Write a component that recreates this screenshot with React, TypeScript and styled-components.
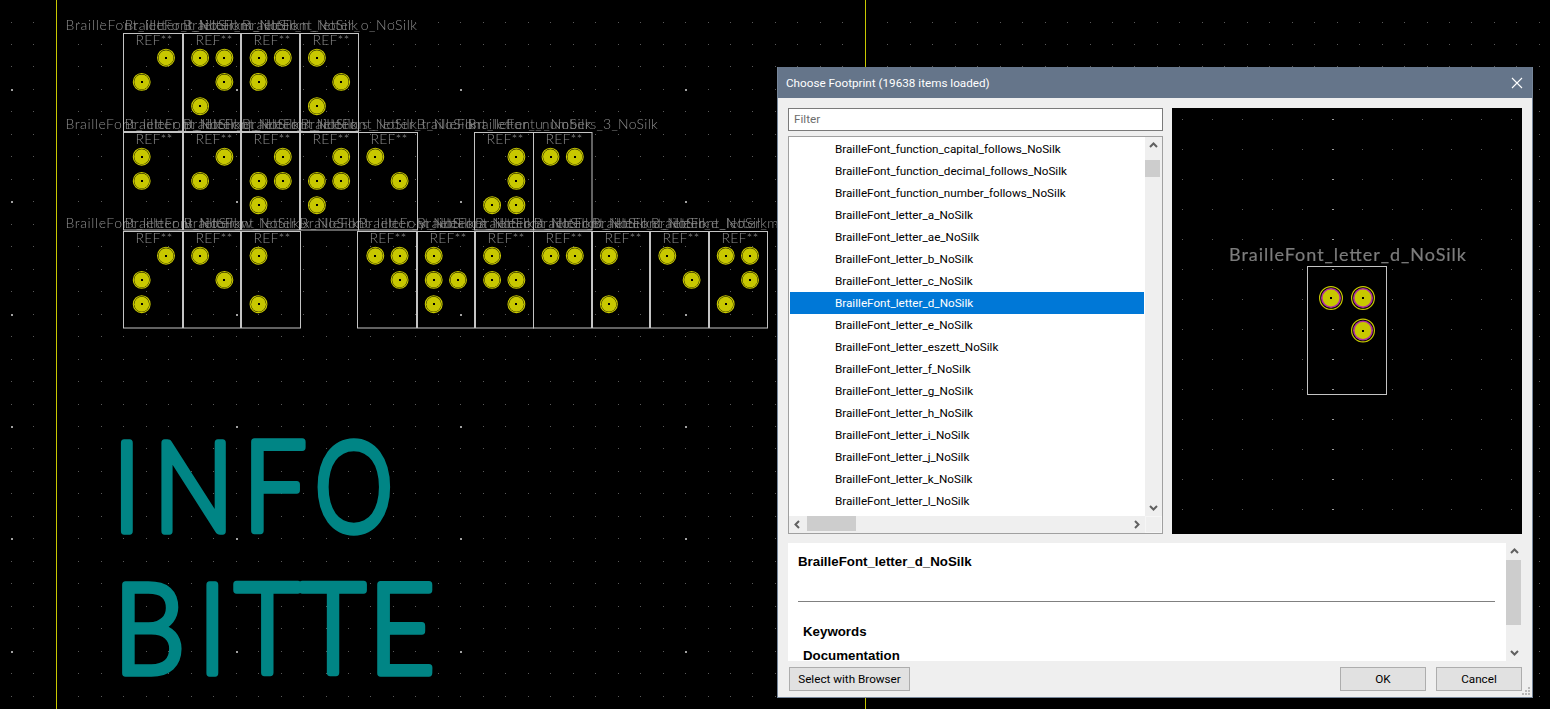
import React from 'react';
import styled, { createGlobalStyle } from 'styled-components';

const Global = createGlobalStyle`
  html, body { margin: 0; padding: 0; background: #000; overflow: hidden; }
  #root { width: 1550px; height: 709px; }
`;

const Desktop = styled.div`
  position: relative;
  width: 1550px;
  height: 709px;
  background: #000;
  overflow: hidden;
`;

const CanvasSvg = styled.svg`
  position: absolute;
  inset: 0;
  display: block;
  will-change: transform;
`;

const SmallLabel = styled.text`
  font-family: 'Lato', 'DejaVu Sans', sans-serif;
  font-weight: 300;
  font-size: 14px;
  fill: #8e8e8e;
`;

const RefText = styled.text`
  font-family: 'Lato', 'DejaVu Sans', sans-serif;
  font-weight: 300;
  font-size: 14px;
  fill: #8e8e8e;
`;

const BigLetter = styled.text`
  font-family: 'Lato', 'Noto Sans', sans-serif;
  font-weight: 300;
  font-size: 125px;
  fill: #008585;
  stroke: #008585;
  stroke-width: 7.5px;
  stroke-linejoin: round;
`;

const PreviewLabel = styled.text`
  font-family: 'Lato', 'DejaVu Sans', sans-serif;
  font-weight: 400;
  font-size: 18px;
  fill: #7c7c7c;
  stroke: #7c7c7c;
  stroke-width: 0.2px;
`;

const Dialog = styled.div`
  position: absolute;
  left: 777px;
  top: 67px;
  width: 756px;
  height: 631px;
  box-sizing: border-box;
  background: #efefef;
  border: 1px solid #76869a;
  border-top: 0;
  display: flex;
  flex-direction: column;
  font-family: 'Roboto', 'Open Sans', sans-serif;
  font-size: 11.7px;
  color: #000;
`;

const TitleBar = styled.div`
  height: 31px;
  flex: none;
  background: #65758a;
  color: #fff;
  display: flex;
  align-items: center;
  justify-content: space-between;
  padding: 0 9px 0 8px;
  font-size: 11.7px;
`;

const CloseBtn = styled.span`
  display: flex;
  width: 12px;
  height: 12px;
`;

const Body = styled.div`
  display: flex;
  flex-direction: column;
  flex: 1;
  padding: 10px 10px 6px 10px;
  min-height: 0;
`;

const TopRow = styled.div`
  display: flex;
  gap: 9px;
  height: 426px;
  flex: none;
`;

const LeftCol = styled.div`
  width: 375px;
  display: flex;
  flex-direction: column;
  gap: 5px;
`;

const FilterBox = styled.div`
  height: 23px;
  box-sizing: border-box;
  flex: none;
  background: #fff;
  border: 1px solid #7a7a7a;
  color: #6d6d6d;
  display: flex;
  align-items: center;
  padding: 0 0 1px 5px;
`;

const ListFrame = styled.div`
  flex: 1;
  min-height: 0;
  box-sizing: border-box;
  border: 1px solid #a0a0a0;
  background: #fff;
  display: grid;
  grid-template-columns: 1fr 17px;
  grid-template-rows: 1fr 17px;
`;

const ListBody = styled.div`
  overflow: hidden;
  padding: 1px 1px 0 1px;
`;

const Row = styled.div<{ $selected?: boolean }>`
  height: 22px;
  display: flex;
  align-items: center;
  padding-left: 45px;
  background: ${p => (p.$selected ? '#0078d7' : 'transparent')};
  color: ${p => (p.$selected ? '#fff' : '#000')};
  white-space: nowrap;
`;

const VBar = styled.div`
  background: #efefef;
  position: relative;
  display: flex;
  flex-direction: column;
  align-items: center;
  justify-content: space-between;
`;

const HBar = styled.div`
  background: #efefef;
  position: relative;
  display: flex;
  align-items: center;
  justify-content: space-between;
`;

const Corner = styled.div`
  background: #efefef;
  border: 1px solid #f6f6f6;
`;

const Thumb = styled.div<{ $l: number; $t: number; $w: number; $h: number }>`
  position: absolute;
  left: ${p => p.$l}px;
  top: ${p => p.$t}px;
  width: ${p => p.$w}px;
  height: ${p => p.$h}px;
  background: #cdcdcd;
`;

const ArrowBox = styled.span`
  width: 17px;
  height: 17px;
  display: flex;
  align-items: center;
  justify-content: center;
  flex: none;
`;

const PreviewPane = styled.div`
  width: 350px;
  background: #000;
  flex: none;
`;

const PreviewSvg = styled.svg`
  display: block;
  will-change: transform;
`;

const InfoRow = styled.div`
  display: flex;
  margin-top: 9px;
  height: 118px;
  flex: none;
`;

const InfoPane = styled.div`
  width: 718px;
  background: #fff;
  overflow: hidden;
  flex: none;
  font-family: 'Liberation Sans', Arial, sans-serif;
  font-weight: 700;
  font-size: 13.3px;
  padding: 11px 11px 0 10px;
  box-sizing: border-box;
`;

const InfoTitle = styled.div`
  line-height: 16px;
  height: 16px;
`;

const InfoRule = styled.hr`
  border: 0;
  height: 1px;
  background: #808080;
  margin: 31px 0 22px 0;
`;

const InfoHeading = styled.div`
  line-height: 16px;
  padding-left: 5px;
  margin-top: 8px;
`;

const InfoBar = styled(VBar)`
  width: 16px;
  flex: none;
`;

const ButtonRow = styled.div`
  display: flex;
  align-items: center;
  margin-top: 6px;
  padding-left: 1px;
`;

const Btn = styled.div<{ $w: number }>`
  width: ${p => p.$w}px;
  height: 24px;
  box-sizing: border-box;
  background: #e1e1e1;
  border: 1px solid #adadad;
  display: flex;
  align-items: center;
  justify-content: center;
  flex: none;
`;

const Spacer = styled.div`
  flex: 1;
`;

const BtnGap = styled.div`
  width: 10px;
`;

const Grip = styled.svg`
  position: absolute;
  right: 1px;
  bottom: 1px;
`;

const Pad: React.FC<{ x: number; y: number }> = ({ x, y }) => (
  <g>
    <circle cx={x} cy={y} r={8.4} fill="#000" stroke="#c8c800" strokeWidth={1.1} />
    <circle cx={x} cy={y} r={7.5} fill="#c8c800" />
    <rect x={Math.round(x) - 1} y={Math.round(y) - 1} width={2} height={2} fill="#000" />
  </g>
);

const BigPad: React.FC<{ x: number; y: number }> = ({ x, y }) => (
  <g>
    <circle cx={x} cy={y} r={11.4} fill="#000" stroke="#c8c800" strokeWidth={1.2} />
    <circle cx={x} cy={y} r={10} fill="#b030a0" />
    <circle cx={x} cy={y} r={8.4} fill="#c8c800" />
    <rect x={Math.round(x) - 1} y={Math.round(y) - 1} width={2} height={2} fill="#000" />
  </g>
);

// slot = column index of the footprint on the 58.4 px placement pitch
type Fp = { slot: number; x: number; w: number; label: string; pads: [number, number][] };
type FpRow = { top: number; h: number; labelY: number; padY: number; fps: Fp[] };

const L = (c: string) => `BrailleFont_letter_${c}_NoSilk`;

const rows: FpRow[] = [
  {
    top: 33.5, h: 98, labelY: 30, padY: 57.7,
    fps: [
      { slot: 0, x: 123.5, w: 59, label: L('l'), pads: [[1, 0], [0, 1]] },
      { slot: 1, x: 183.5, w: 57, label: L('m'), pads: [[0, 0], [1, 0], [1, 1], [0, 2]] },
      { slot: 2, x: 241.5, w: 58, label: L('n'), pads: [[0, 0], [1, 0], [0, 1]] },
      { slot: 3, x: 300.5, w: 58, label: L('o'), pads: [[0, 0], [1, 1], [0, 2]] },
    ],
  },
  {
    top: 132.5, h: 97.5, labelY: 129, padY: 156.7,
    fps: [
      { slot: 0, x: 123.5, w: 59, label: L('p'), pads: [[0, 0], [0, 1]] },
      { slot: 1, x: 183.5, w: 57, label: L('q'), pads: [[1, 0], [0, 1]] },
      { slot: 2, x: 241.5, w: 58, label: L('r'), pads: [[1, 0], [0, 1], [1, 1], [0, 2]] },
      { slot: 3, x: 300.5, w: 58, label: L('s'), pads: [[1, 0], [0, 1], [1, 1], [0, 2]] },
      { slot: 4, x: 358.5, w: 59, label: L('t'), pads: [[0, 0], [1, 1]] },
      { slot: 6, x: 474.5, w: 59, label: L('u'), pads: [[1, 0], [1, 1], [0, 2], [1, 2]] },
      { slot: 7, x: 533.5, w: 58.5, label: 'BrailleFont_numbers_3_NoSilk', pads: [[0, 0], [1, 0]] },
    ],
  },
  {
    top: 231.5, h: 96.5, labelY: 228, padY: 255.7,
    fps: [
      { slot: 0, x: 123.5, w: 59, label: L('v'), pads: [[1, 0], [0, 1], [0, 2]] },
      { slot: 1, x: 183.5, w: 57, label: L('w'), pads: [[0, 0], [1, 1]] },
      { slot: 2, x: 241.5, w: 59, label: L('x'), pads: [[0, 0], [0, 2]] },
      { slot: 4, x: 357.5, w: 59, label: L('y'), pads: [[0, 0], [1, 0], [1, 1]] },
      { slot: 5, x: 417.5, w: 57, label: L('z'), pads: [[0, 0], [0, 1], [1, 1], [0, 2]] },
      { slot: 6, x: 475.5, w: 58, label: L('a'), pads: [[0, 0], [0, 1], [1, 1], [1, 2]] },
      { slot: 7, x: 533.5, w: 58, label: L('b'), pads: [[0, 0], [1, 0]] },
      { slot: 8, x: 592.5, w: 57, label: L('c'), pads: [[0, 0], [0, 2]] },
      { slot: 9, x: 650.5, w: 58, label: L('e'), pads: [[0, 0], [1, 1]] },
      { slot: 10, x: 709.5, w: 58, label: L('m'), pads: [[0, 0], [1, 0], [1, 1], [0, 2]] },
    ],
  },
];

const PAD_Y = [0, 24.2, 48.5];
const bigLetters: { c: string; x: number; y: number; sx: number }[] = [
  { c: 'I', x: 113, y: 531, sx: 0.85 },
  { c: 'N', x: 153.6, y: 531, sx: 0.85 },
  { c: 'F', x: 242.8, y: 531, sx: 0.9 },
  { c: 'O', x: 314.7, y: 531, sx: 0.79 },
  { c: 'B', x: 113.7, y: 673, sx: 0.9 },
  { c: 'I', x: 198.5, y: 673, sx: 0.85 },
  { c: 'T', x: 235, y: 673, sx: 0.89 },
  { c: 'T', x: 300.7, y: 673, sx: 0.89 },
  { c: 'E', x: 368.7, y: 673, sx: 0.91 },
];

const gridDots = (() => {
  const out: { x: number; y: number; major: boolean }[] = [];
  for (let i = -6; i < 66; i++) {
    for (let j = -19; j < 14; j++) {
      out.push({
        x: Math.round(123.3 + i * 22.47),
        y: Math.round(426 + j * 22.47),
        major: (i + 5) % 10 === 0 && (j + 5) % 5 === 0,
      });
    }
  }
  return out;
})();

const previewDots = (() => {
  const out: { x: number; y: number; major: boolean }[] = [];
  for (let i = 0; i < 12; i++) {
    for (let j = 0; j < 14; j++) {
      out.push({ x: Math.round(10.3 + i * 29.9), y: Math.round(11.3 + j * 30), major: i === 5 });
    }
  }
  return out;
})();

const names = [
  'BrailleFont_function_capital_follows_NoSilk',
  'BrailleFont_function_decimal_follows_NoSilk',
  'BrailleFont_function_number_follows_NoSilk',
  'BrailleFont_letter_a_NoSilk',
  'BrailleFont_letter_ae_NoSilk',
  'BrailleFont_letter_b_NoSilk',
  'BrailleFont_letter_c_NoSilk',
  'BrailleFont_letter_d_NoSilk',
  'BrailleFont_letter_e_NoSilk',
  'BrailleFont_letter_eszett_NoSilk',
  'BrailleFont_letter_f_NoSilk',
  'BrailleFont_letter_g_NoSilk',
  'BrailleFont_letter_h_NoSilk',
  'BrailleFont_letter_i_NoSilk',
  'BrailleFont_letter_j_NoSilk',
  'BrailleFont_letter_k_NoSilk',
  'BrailleFont_letter_l_NoSilk',
];

const Chevron: React.FC<{ dir: 'up' | 'down' | 'left' | 'right' }> = ({ dir }) => {
  const d = {
    up: 'M1 6 L4.5 2.5 L8 6',
    down: 'M1 3 L4.5 6.5 L8 3',
    left: 'M6 1 L2.5 4.5 L6 8',
    right: 'M3 1 L6.5 4.5 L3 8',
  }[dir];
  return (
    <svg width="9" height="9" viewBox="0 0 9 9">
      <path d={d} fill="none" stroke="#606060" strokeWidth="2" />
    </svg>
  );
};

export default function App() {
  return (
    <Desktop>
      <Global />
      <CanvasSvg width={1550} height={709} viewBox="0 0 1550 709">
        {gridDots.map((d, i) => (
          <rect
            key={i}
            x={d.x}
            y={d.y}
            width={d.major ? 2 : 1}
            height={d.major ? 2 : 1}
            fill={d.major ? '#a0a0a0' : '#5a5a5a'}
          />
        ))}
        <rect x={56} y={0} width={1} height={709} fill="#c8c800" />
        <rect x={865} y={0} width={1} height={709} fill="#c8c800" />
        {rows.map((r, ri) => (
          <g key={ri}>
            {r.fps.map((f, fi) => {
              const lw = f.label.length > 27 ? 190 : 175;
              return (
                <SmallLabel
                  key={fi}
                  x={f.x + f.w / 2 - lw / 2}
                  y={r.labelY}
                  textLength={lw}
                  lengthAdjust="spacing"
                >
                  {f.label}
                </SmallLabel>
              );
            })}
          </g>
        ))}
        {rows.map((r, ri) => (
          <g key={ri}>
            {r.fps.map((f, fi) => (
              <g key={fi}>
                <rect x={f.x} y={r.top} width={f.w} height={r.h} fill="none" stroke="#c4c4c4" strokeWidth={1} />
                <RefText x={f.x + 12} y={r.top + 11.5} textLength={37} lengthAdjust="spacing">
                  REF**
                </RefText>
                {f.pads.map(([c, ro], pi) => (
                  <Pad key={pi} x={141.7 + f.slot * 58.4 + c * 24.3} y={r.padY + PAD_Y[ro]} />
                ))}
              </g>
            ))}
          </g>
        ))}
        {bigLetters.map((l, i) => (
          <BigLetter key={i} transform={`translate(${l.x} ${l.y}) scale(${l.sx} 1)`}>
            {l.c}
          </BigLetter>
        ))}
      </CanvasSvg>

      <Dialog>
        <TitleBar>
          <span>Choose Footprint (19638 items loaded)</span>
          <CloseBtn>
            <svg width="12" height="12" viewBox="0 0 12 12">
              <path d="M1 1 L11 11 M11 1 L1 11" stroke="#fff" strokeWidth="1.1" fill="none" />
            </svg>
          </CloseBtn>
        </TitleBar>
        <Body>
          <TopRow>
            <LeftCol>
              <FilterBox>Filter</FilterBox>
              <ListFrame>
                <ListBody>
                  {names.map((n, i) => (
                    <Row key={n} $selected={i === 7}>{n}</Row>
                  ))}
                </ListBody>
                <VBar>
                  <ArrowBox><Chevron dir="up" /></ArrowBox>
                  <Thumb $l={0} $t={23} $w={15} $h={17} />
                  <ArrowBox><Chevron dir="down" /></ArrowBox>
                </VBar>
                <HBar>
                  <ArrowBox><Chevron dir="left" /></ArrowBox>
                  <Thumb $l={18} $t={0} $w={49} $h={15} />
                  <ArrowBox><Chevron dir="right" /></ArrowBox>
                </HBar>
                <Corner />
              </ListFrame>
            </LeftCol>
            <PreviewPane>
              <PreviewSvg width={350} height={426} viewBox="0 0 350 426">
                {previewDots.map((d, i) => (
                  <rect key={i} x={d.x} y={d.y} width={d.major ? 2 : 1} height={1} fill={d.major ? '#9a9a9a' : '#5a5a5a'} />
                ))}
                <PreviewLabel x={57} y={153} textLength={237} lengthAdjust="spacing">BrailleFont_letter_d_NoSilk</PreviewLabel>
                <rect x={135.5} y={158.5} width={79} height={128} fill="none" stroke="#c4c4c4" strokeWidth={1} />
                <BigPad x={159} y={190} />
                <BigPad x={191} y={190} />
                <BigPad x={191} y={222.5} />
              </PreviewSvg>
            </PreviewPane>
          </TopRow>
          <InfoRow>
            <InfoPane>
              <InfoTitle>BrailleFont_letter_d_NoSilk</InfoTitle>
              <InfoRule />
              <InfoHeading>Keywords</InfoHeading>
              <InfoHeading>Documentation</InfoHeading>
            </InfoPane>
            <InfoBar>
              <ArrowBox><Chevron dir="up" /></ArrowBox>
              <Thumb $l={0} $t={17} $w={15} $h={65} />
              <ArrowBox><Chevron dir="down" /></ArrowBox>
            </InfoBar>
          </InfoRow>
          <ButtonRow>
            <Btn $w={121}>Select with Browser</Btn>
            <Spacer />
            <Btn $w={86}>OK</Btn>
            <BtnGap />
            <Btn $w={86}>Cancel</Btn>
          </ButtonRow>
        </Body>
        <Grip width="10" height="10" viewBox="0 0 10 10">
          {[[7, 1], [4, 4], [7, 4], [1, 7], [4, 7], [7, 7]].map(([x, y], i) => (
            <rect key={i} x={x} y={y} width={2} height={2} fill="#b8b8b8" />
          ))}
        </Grip>
      </Dialog>
    </Desktop>
  );
}
